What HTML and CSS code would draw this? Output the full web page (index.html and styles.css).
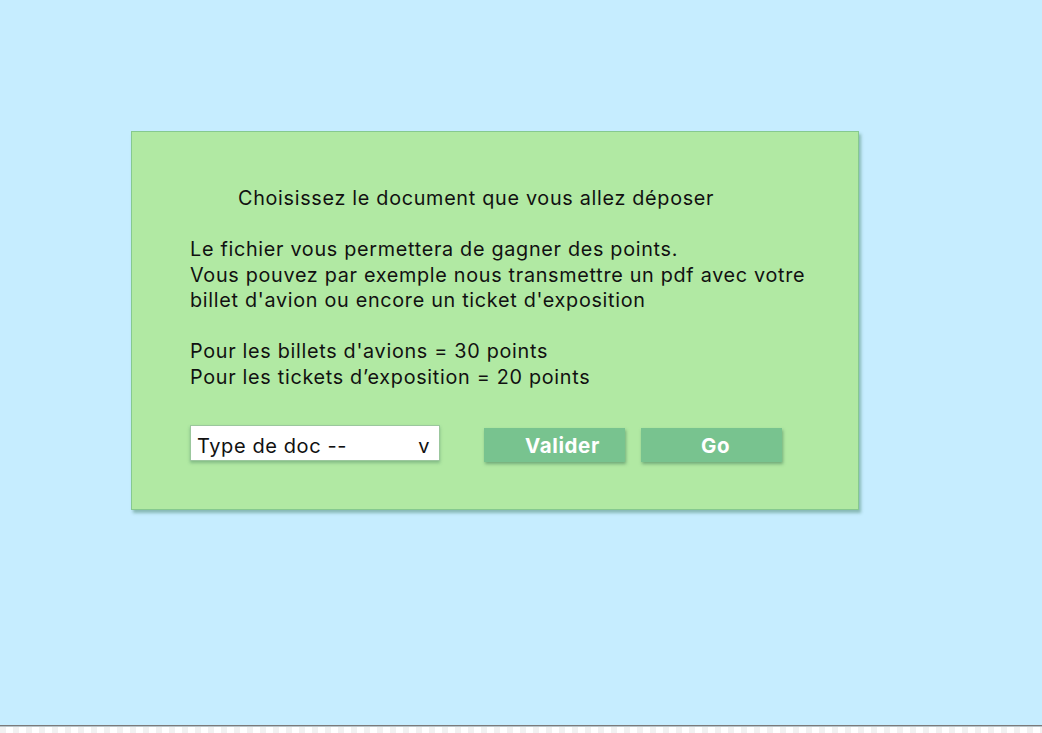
FILE: index.html
```html
<!DOCTYPE html>
<html lang="fr">
<head>
<meta charset="utf-8">
<link rel="stylesheet" href="styles.css">
</head>
<body>
<div class="canvas">
  <div class="card">
    <h1 class="title">Choisissez le document que vous allez déposer</h1>
    <p class="text">Le fichier vous permettera de gagner des points.<br>Vous pouvez par exemple nous transmettre un pdf avec votre<br>billet d'avion ou encore un ticket d'exposition<br><br>Pour les billets d'avions = 30 points<br>Pour les tickets d’exposition = 20 points</p>
    <div class="actions">
      <div class="select"><span>Type de doc --</span><span class="caret">v</span></div>
      <button class="btn btn-valider">Valider</button>
      <button class="btn btn-go">Go</button>
    </div>
  </div>
</div>
<div class="strip"></div>
</body>
</html>
```
FILE: styles.css
```css
html, body {
  margin: 0;
  padding: 0;
}
body {
  width: 1042px;
  height: 733px;
  overflow: hidden;
  font-family: Inter, "Noto Sans", sans-serif;
  background: #c6edff;
  display: flex;
  flex-direction: column;
}
.canvas {
  height: 725px;
  padding: 131px 0 0 131px;
  box-sizing: border-box;
}
.card {
  width: 728px;
  height: 379px;
  box-sizing: border-box;
  background: #b1e9a3;
  border: 1px solid #86c98f;
  box-shadow: 2px 3px 3px rgba(60, 120, 90, 0.45);
  padding: 53px 0 0 58px;
  color: #111;
}
.title {
  margin: 0 0 0 48px;
  font-size: 19.8px;
  letter-spacing: 0.7px;
  font-weight: 400;
  line-height: 26px;
}
.text {
  margin: 26px 0 0 0;
  font-size: 19.8px;
  letter-spacing: 0.7px;
  line-height: 25.5px;
}
.actions {
  display: flex;
  align-items: flex-start;
  margin-top: 35px;
}
.select {
  width: 250px;
  height: 36px;
  box-sizing: border-box;
  background: #fff;
  border: 1px solid #9bc79d;
  box-shadow: 0 2px 3px rgba(60, 120, 90, 0.4);
  display: flex;
  justify-content: space-between;
  align-items: center;
  padding: 5px 9px 0 6px;
  font-size: 20px;
  letter-spacing: 0.6px;
  color: #111;
}
.btn {
  height: 34px;
  width: 141px;
  border: none;
  background: #78c38f;
  color: #fff;
  font-family: Inter, "Noto Sans", sans-serif;
  font-weight: 700;
  font-size: 20.5px;
  letter-spacing: 0.6px;
  box-shadow: 1px 2px 3px rgba(50, 110, 80, 0.5);
  padding: 1px 0 0 0;
  margin-top: 3px;
}
.btn-valider {
  margin-left: 44px;
  padding-left: 16px;
}
.btn-go {
  margin-left: 16px;
  padding-left: 8px;
}
.strip {
  height: 8px;
  border-top: 1px solid #7a7a7a;
  box-shadow: inset 0 1px 0 #b9c4c9;
  background-color: #fff;
  background-image: linear-gradient(90deg, #f1f1f1 50%, #ffffff 50%);
  background-size: 13px 100%;
  box-sizing: border-box;
}
```
